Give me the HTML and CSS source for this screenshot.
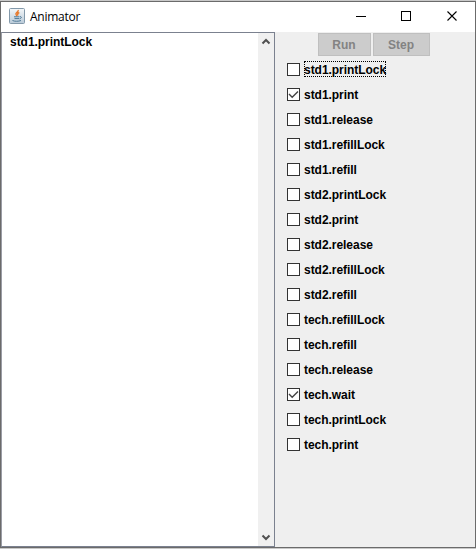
FILE: index.html
```html
<!DOCTYPE html>
<html lang="en">
<head>
<meta charset="utf-8">
<title>Animator</title>
<link rel="stylesheet" href="styles.css">
</head>
<body>
<div class="window">
  <header class="titlebar">
    <svg class="app-icon" width="16" height="16" viewBox="0 0 16 16">
      <defs><linearGradient id="g" x1="0" y1="0" x2="0" y2="1"><stop offset="0" stop-color="#f4f7f9"/><stop offset="1" stop-color="#b9cad8"/></linearGradient></defs>
      <rect x=".5" y=".5" width="15" height="15" rx="1" fill="url(#g)" stroke="#8399aa"/>
      <path d="M9.2 2C9.8 4 6 4.800 7 6.500L8 8M10.300 4.500C8.500 5.300 8.300 6 9 7.500" fill="none" stroke="#e8792b" stroke-width="1.400"/>
      <path d="M5 8.800h5.500M5.500 10.600h4.500M3.500 12.500c2 1 6 1 8.500 0M11 8.600c2-.2 1.700 1.800-.5 2.200" fill="none" stroke="#4d7896"/>
    </svg>
    <span class="title">Animator</span>
    <svg class="controls" width="116" height="16" viewBox="0 0 116 16" fill="none" stroke="#000" shape-rendering="crispEdges">
      <path d="M0 8.500h10"/>
      <rect x="45.500" y="3.500" width="9" height="9"/>
      <path d="M91.500 3.500l9 9M100.500 3.500l-9 9" shape-rendering="auto" stroke-width="1.100"/>
    </svg>
  </header>
  <main class="content">
    <section class="trace">
      <div class="log">std1.printLock</div>
      <div class="scrollbar">
        <svg width="10" height="7" viewBox="0 0 10 7"><path d="M1.500 5.500L5 2l3.500 3.500" /></svg>
        <svg width="10" height="7" viewBox="0 0 10 7"><path d="M1.500 1.500L5 5l3.500-3.500" /></svg>
      </div>
    </section>
    <section class="actions">
      <div class="toolbar"><button class="run" disabled>Run</button><button class="step" disabled>Step</button></div>
      <div class="list">
        <div class="item"><i class="box"></i><span class="focused">std1.printLock</span></div>
        <div class="item"><i class="box"><svg width="11" height="11" viewBox="0 0 11 11"><path d="M1 5l3.200 3.300L10 2.500"/></svg></i><span>std1.print</span></div>
        <div class="item"><i class="box"></i><span>std1.release</span></div>
        <div class="item"><i class="box"></i><span>std1.refillLock</span></div>
        <div class="item"><i class="box"></i><span>std1.refill</span></div>
        <div class="item"><i class="box"></i><span>std2.printLock</span></div>
        <div class="item"><i class="box"></i><span>std2.print</span></div>
        <div class="item"><i class="box"></i><span>std2.release</span></div>
        <div class="item"><i class="box"></i><span>std2.refillLock</span></div>
        <div class="item"><i class="box"></i><span>std2.refill</span></div>
        <div class="item"><i class="box"></i><span>tech.refillLock</span></div>
        <div class="item"><i class="box"></i><span>tech.refill</span></div>
        <div class="item"><i class="box"></i><span>tech.release</span></div>
        <div class="item"><i class="box"><svg width="11" height="11" viewBox="0 0 11 11"><path d="M1 5l3.200 3.300L10 2.500"/></svg></i><span>tech.wait</span></div>
        <div class="item"><i class="box"></i><span>tech.printLock</span></div>
        <div class="item"><i class="box"></i><span>tech.print</span></div>
      </div>
    </section>
  </main>
</div>
</body>
</html>
```
FILE: styles.css
```css
* { box-sizing: border-box; }
body {
  margin: 0;
  height: 549px;
  padding: 1px 0;
  background: #c9c9c9;
  font: bold 12px/14px "Liberation Sans", Arial, sans-serif;
  letter-spacing: -0.04px;
  color: #000;
  overflow: hidden;
}
.window {
  height: 547px;
  display: flex;
  flex-direction: column;
  border: 1px solid #6b6b6b;
  background: #fff;
}
.titlebar {
  height: 30px;
  flex: none;
  display: flex;
  align-items: center;
  padding: 0 3px 0 8px;
}
.app-icon { margin-right: 5px; margin-bottom: 2px; }
.title {
  font: 12px/16px "Open Sans", "Noto Sans", sans-serif;
  letter-spacing: -0.25px;
  margin-top: -1px;
}
.controls { margin: -2px 0 0 auto; }
.content { flex: 1; display: flex; min-height: 0; }
.trace {
  width: 274px;
  display: flex;
  border: 1px solid #7a8a99;
  border-color: #7b818f;
  border-left-color: #9a9ca5;
}
.log { flex: 1; padding: 2px 0 0 8px; }
.scrollbar {
  width: 16px;
  background: #f0f0f0;
  display: flex;
  flex-direction: column;
  justify-content: space-between;
  align-items: center;
  padding: 5px 0;
}
.scrollbar path { fill: none; stroke: #505050; stroke-width: 2; }
.actions { flex: 1; background: #efefef; }
.toolbar { display: flex; gap: 2px; padding: 1px 0 0 43px; }
.toolbar button {
  height: 23px;
  padding: 0 1px 0 0;
  border: 1px solid #bfbfbf;
  background: #ccc;
  color: #838383;
  font: inherit;
}
.run { width: 53px; }
.step { width: 57px; }
.list { padding: 1px 0 0 12px; }
.item { height: 25px; display: flex; align-items: center; gap: 4px; }
.box {
  width: 13px;
  height: 13px;
  border: 1px solid #333;
  background: #fff;
}
.box svg { display: block; }
.box path { fill: none; stroke: #444; stroke-width: 1.4; }
.item span { height: 16px; line-height: 18px; margin-top: -1px; }
.focused { outline: 1px dotted #000; outline-offset: -1px; }
```
